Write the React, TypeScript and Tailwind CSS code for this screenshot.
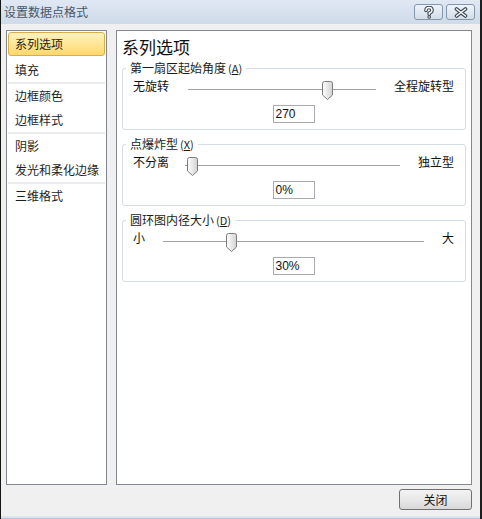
import React from 'react';

const cjk = "font-['Noto_Sans_CJK_SC','Microsoft_YaHei',sans-serif]";

const Thumb = ({ pos }: { pos: string }) => (
  <svg className={`absolute top-[3px] ${pos}`} width="11" height="19" viewBox="0 0 11 19">
    <defs>
      <linearGradient id="thumbFill" x1="0" y1="0" x2="1" y2="0">
        <stop offset="0" stopColor="#ffffff" />
        <stop offset="1" stopColor="#d2d2d2" />
      </linearGradient>
    </defs>
    <path d="M0.5 2.5 Q0.5 0.5 2.5 0.5 H8.5 Q10.5 0.5 10.5 2.5 V14 L5.5 18.5 L0.5 14 Z" fill="url(#thumbFill)" stroke="#7b7b7b" />
  </svg>
);

interface GroupProps {
  legend: string;
  keyLetter: string;
  left: string;
  right: string;
  trackGap: string;
  thumbPos: string;
  value: string;
  className?: string;
}

const Group: React.FC<GroupProps> = ({ legend, keyLetter, left, right, trackGap, thumbPos, value, className = '' }) => (
  <fieldset className={`border border-[#d5dce5] rounded-[3px] pl-[10px] pr-[11px] pb-[6px] ${className}`}>
    <legend className="-ml-[7px] px-[4px] leading-[16px] text-[12px] text-[#1b1b1b]">
      {legend}
      <span className="text-[11px] ml-[2px]">(<span className="underline">{keyLetter}</span>)</span>
    </legend>
    {/* slider row */}
    <div className="flex items-start h-[22px] mt-[2px]">
      <span className="leading-[16px] text-[12px] text-[#111]">{left}</span>
      <div className={`relative flex-1 h-[22px] ${trackGap}`}>
        <div className="mt-[11px] h-px bg-[#a3a3a3]" />
        <div className="h-px bg-white" />
        <Thumb pos={thumbPos} />
      </div>
      <span className="leading-[16px] text-[12px] text-[#111]">{right}</span>
    </div>
    <div className="mx-auto mt-[5px] w-[42px] h-[18px] border border-[#a9abb0] bg-white flex items-center pl-[2px] font-['Liberation_Sans',sans-serif] text-[12px] text-[#111]">
      {value}
    </div>
  </fieldset>
);

const Separator = () => <div className="h-[2px] bg-[#ebebef]" />;

const Item = ({ label }: { label: string }) => (
  <div className="h-[24px] flex items-center pl-[7px] text-[12px] text-[#1e1e1e]">{label}</div>
);

export default function App() {
  return (
    <div className={`w-[482px] h-[519px] flex flex-col bg-[#f0f0f0] border-l border-l-[#161616] border-r-2 border-r-[#1e1e1e] ${cjk}`}>
      {/* Title bar */}
      <div className="h-[24px] flex items-center justify-between bg-gradient-to-b from-[#dfe8f3] to-[#cfdbe9] pl-[3px] pr-[5px]">
        <span className="text-[12px] text-[#475669]">设置数据点格式</span>
        <div className="flex gap-[3px]">
          <button className="w-[29px] h-[16px] rounded-[3px] border border-[#8597ad] bg-gradient-to-b from-[#eef3f9] to-[#d3dde9] flex items-center justify-center">
            <svg width="12" height="13" viewBox="0 0 12 13">
              <path d="M3 4.5 Q3 1.5 6 1.5 Q9 1.5 9 4.2 Q9 6.2 6.2 7.2 V8.3" fill="none" stroke="#3b4654" strokeWidth="3.6" strokeLinecap="round" />
              <circle cx="6.2" cy="11" r="1.8" fill="#3b4654" />
              <path d="M3 4.5 Q3 1.5 6 1.5 Q9 1.5 9 4.2 Q9 6.2 6.2 7.2 V8.3" fill="none" stroke="#ffffff" strokeWidth="1.4" strokeLinecap="round" />
              <circle cx="6.2" cy="11" r="0.8" fill="#ffffff" />
            </svg>
          </button>
          <button className="w-[29px] h-[16px] rounded-[3px] border border-[#8597ad] bg-gradient-to-b from-[#eef3f9] to-[#d3dde9] flex items-center justify-center">
            <svg width="14" height="11" viewBox="0 0 14 11">
              <path d="M2.5 2 L11.5 9 M11.5 2 L2.5 9" stroke="#3b4654" strokeWidth="3.6" strokeLinecap="round" />
              <path d="M2.5 2 L11.5 9 M11.5 2 L2.5 9" stroke="#ffffff" strokeWidth="1.5" strokeLinecap="round" />
            </svg>
          </button>
        </div>
      </div>

      {/* Body */}
      <div className="flex-1 flex flex-col pt-[6px] pl-[5px] pr-[8px]">
        <div className="flex gap-[9px] h-[455px]">
          {/* Category list */}
          <div className="w-[101px] border border-[#828790] bg-white px-[1px] pt-[1px]">
            <div className="h-[24px] flex items-center pl-[6px] rounded-[3px] border border-[#dcac4a] bg-gradient-to-b from-[#fff2bd] to-[#ffd86a] text-[12px] text-[#1e1e1e]">
              系列选项
            </div>
            <div className="h-[2px]" />
            <Item label="填充" />
            <Separator />
            <Item label="边框颜色" />
            <Item label="边框样式" />
            <Separator />
            <Item label="阴影" />
            <Item label="发光和柔化边缘" />
            <Separator />
            <Item label="三维格式" />
          </div>

          {/* Options panel */}
          <div className="w-[356px] border border-[#828790] bg-white px-[5px] pt-[6px]">
            <div className="text-[17px] leading-[20px] text-[#111] mb-[3px]">系列选项</div>
            <Group
              legend="第一扇区起始角度"
              keyLetter="A"
              left="无旋转"
              right="全程旋转型"
              trackGap="ml-[19px] mr-[18px]"
              thumbPos="left-[134px]"
              value="270"
            />
            <Group
              className="mt-[6px]"
              legend="点爆炸型"
              keyLetter="X"
              left="不分离"
              right="独立型"
              trackGap="ml-[16px] mr-[18px]"
              thumbPos="left-[2px]"
              value="0%"
            />
            <Group
              className="mt-[6px]"
              legend="圆环图内径大小"
              keyLetter="D"
              left="小"
              right="大"
              trackGap="ml-[18px] mr-[18px]"
              thumbPos="left-[63px]"
              value="30%"
            />
          </div>
        </div>

        {/* Footer */}
        <div className="flex justify-end mt-[4px]">
          <button className="w-[73px] h-[21px] rounded-[3px] border border-[#707070] bg-gradient-to-b from-[#f3f3f3] via-[#e8e8e8] to-[#d8d8d8] text-[12px] text-[#111] flex items-center justify-center">
            关闭
          </button>
        </div>
      </div>
      <div className="h-[2px] bg-[#dbe5f1]" />
      <div className="h-px bg-[#b8c1cc]" />
    </div>
  );
}
